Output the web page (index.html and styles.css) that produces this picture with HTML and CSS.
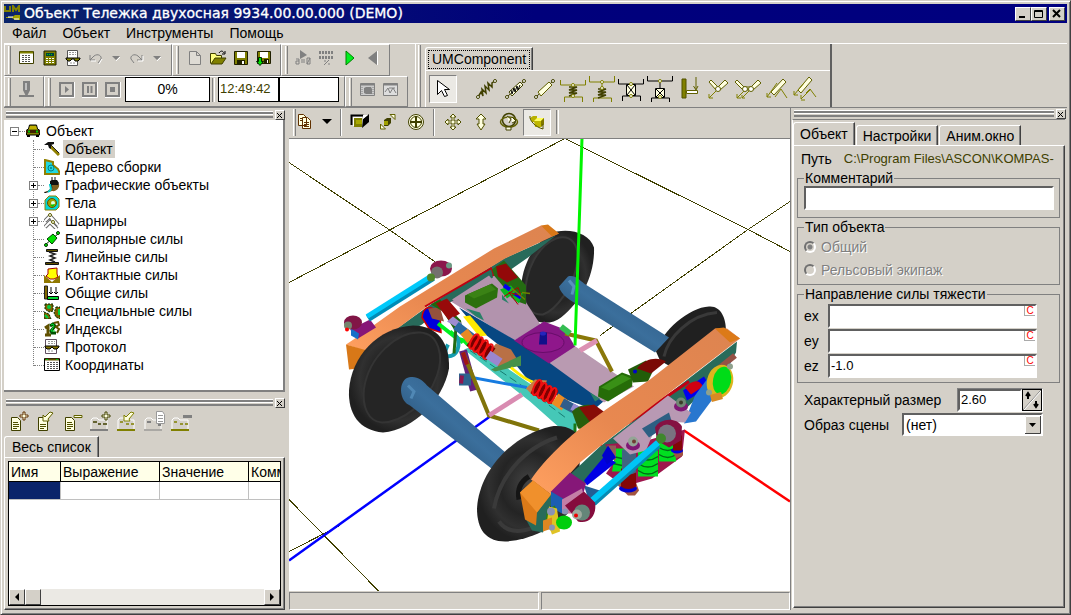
FILE: index.html
```html
<!DOCTYPE html>
<html lang="ru">
<head>
<meta charset="utf-8">
<title>Объект Тележка двухосная 9934.00.00.000 (DEMO)</title>
<link rel="stylesheet" href="styles.css">
</head>
<body>
<div class="window">
  <header class="titlebar">
    <svg class="app-icon" width="17" height="18" viewBox="0 0 17 18"><path d="M1 1v5h5V1M9 7V1l3 4 3-4v6" fill="none" stroke="#808000" stroke-width="2"/><path d="M2 12h6l3-2h5v5h-5l-3-2H2z" fill="#a0a000"/><path d="M4 12h5M10 14h5" stroke="#fff"/></svg>
    <h1>Объект Тележка двухосная 9934.00.00.000 (DEMO)</h1>
    <div class="winbtns">
      <button class="wb" aria-label="Свернуть"><svg width="12" height="10"><path d="M2 8h6" stroke="#000" stroke-width="2"/></svg></button>
      <button class="wb" aria-label="Развернуть"><svg width="12" height="10"><path d="M1.5 1.5h8v7h-8zM1 2.5h9" fill="none" stroke="#000"/></svg></button>
      <button class="wb last" aria-label="Закрыть"><svg width="12" height="10"><path d="M2 1l7 7M9 1L2 8" stroke="#000" stroke-width="2"/></svg></button>
    </div>
  </header>
  <nav class="menu">
    <button>Файл</button><button>Объект</button><button>Инструменты</button><button>Помощь</button>
  </nav>

  <div class="toolbars">
    <div class="toolrows">
      <div class="toolrow">
        <div class="band"><i class="grip"></i>
          <button class="tb" aria-label="Список"><svg width="16" height="16"><path d="M.5 1.500h14v12H.5z" fill="#fff" stroke="#404000"/><path d="M1 2.500h13" stroke="#808000" stroke-width="2"/><path d="M3 5.500h9M3 7.500h9M3 9.500h9M3 11.500h9" stroke="#555" stroke-dasharray="2 1"/></svg></button>
          <button class="tb" aria-label="Калькулятор"><svg width="16" height="16"><path d="M2 1h12v14H2z" fill="#808000" stroke="#202000"/><path d="M4 3h8v3H4z" fill="#004040"/><path d="M4 8.500h8M4 10.500h8M4 12.500h8" stroke="#fff" stroke-dasharray="2 1"/><path d="M5 4.500h6" stroke="#0c0" stroke-dasharray="1 1"/></svg></button>
          <button class="tb" aria-label="Протокол"><svg width="16" height="16"><path d="M2.500.5h10v15h-10z" fill="#fff" stroke="#555"/><path d="M4 2.500h7M4 4.500h7M5 13h6" stroke="#999" stroke-dasharray="2 1"/><path d="M1 8h14v1l-2 2h-3L9 9H7l-2 2H3L1 9z" fill="#808000" stroke="#000"/></svg></button>
          <button class="tb" aria-label="Отменить"><svg width="16" height="14"><path d="M2 4v5h5M2 9l4-4c4-3 8 0 7 3l-3 4" fill="none" stroke="#808080"/><path d="M3 10h5M14 8l-3 5" stroke="#fff"/></svg></button>
          <button class="tb narrow" aria-label="Список отмены"><svg width="10" height="8"><path d="M1 2h8L5 6z" fill="#808080"/><path d="M9 3L5 7" stroke="#fff"/></svg></button>
          <button class="tb" aria-label="Повторить"><svg width="16" height="14"><path d="M13 4v5H8M13 9L9 5C5 2 1 5 2 8l3 4" fill="none" stroke="#808080"/><path d="M14 5v5H9" fill="none" stroke="#fff"/></svg></button>
          <button class="tb narrow" aria-label="Список повтора"><svg width="10" height="8"><path d="M1 2h8L5 6z" fill="#808080"/><path d="M9 3L5 7" stroke="#fff"/></svg></button>
        </div>
        <div class="band"><i class="grip"></i>
          <button class="tb" aria-label="Новый"><svg width="16" height="16"><path d="M2.500 1.500h7l4 4v9h-11zM9.500 1.500v4h4" fill="#dedbd4" stroke="#808080"/></svg></button>
          <button class="tb" aria-label="Открыть"><svg width="18" height="16"><path d="M1.500 13.500v-10h5l1 2h5v3" fill="#ffff80" stroke="#404000"/><path d="M2 14l4-6h11l-4 6z" fill="#808000" stroke="#404000"/><path d="M10 3c2-3 4-2 5 0M16 1v3h-3" fill="none" stroke="#000"/></svg></button>
          <button class="tb" aria-label="Сохранить"><svg width="16" height="16"><path d="M1.500 1.500h13v13h-13z" fill="#808000" stroke="#202000"/><path d="M4 2h8v6H4z" fill="#fff"/><path d="M4 10h8v4H4z" fill="#202000"/><path d="M9 11h2v3H9z" fill="#fff"/></svg></button>
          <button class="tb" aria-label="Сохранить как"><svg width="17" height="16"><path d="M2.500 1.500h13v12h-13z" fill="#808000" stroke="#202000"/><path d="M5 2h8v6H5z" fill="#fff"/><path d="M9 9h5v4H9z" fill="#202000"/><path d="M12 10h1v3h-1z" fill="#fff"/><path d="M3.500 7.500h3v4h2l-3.500 4-3.500-4h2z" fill="#00e000" stroke="#002000"/></svg></button>
        </div>
        <div class="band"><i class="grip"></i>
          <button class="tb" aria-label="Начальные условия"><svg width="17" height="16"><path d="M5 0l7 5-7 4z" fill="#808080"/><path d="M1 9h3v5H1v-3h3M6 10h4M6 12h4M12 8h3v6h-3zM12 14l3-6" fill="none" stroke="#808080"/></svg></button>
          <button class="tb" aria-label="Интегрирование"><svg width="17" height="16"><path d="M1 2.500h15M1 7.500h15" stroke="#808080" stroke-width="3" stroke-dasharray="2 1"/><path d="M6 15l5-5M6 11h2M10 14h2" stroke="#808080"/></svg></button>
          <button class="tb" aria-label="Пуск"><svg width="12" height="16"><path d="M2 1l8 7-8 7z" fill="#00f020" stroke="#008000"/></svg></button>
          <button class="tb" aria-label="Назад"><svg width="12" height="16"><path d="M10 1L1 8l9 7z" fill="#808080"/><path d="M10.500 1v14" stroke="#fff"/></svg></button>
        </div>
      </div>
      <div class="toolrow">
        <div class="band"><i class="grip"></i>
          <button class="tb" aria-label="Перо"><svg width="17" height="18"><path d="M6 1h5v8l-2 4H8L6 9zM1 15h15" fill="#808080" stroke="#808080" stroke-width="2"/><path d="M8 2v7" stroke="#fff"/></svg></button>
        </div>
        <div class="band"><i class="grip"></i>
          <button class="tb" aria-label="Воспроизвести"><svg width="16" height="16"><path d="M1 1h13v13H1z" fill="none" stroke="#808080" stroke-width="2"/><path d="M6 4l4 3.500L6 11z" fill="#808080"/><path d="M15.500 0v15.500H0" fill="none" stroke="#fff"/></svg></button>
          <button class="tb" aria-label="Пауза"><svg width="16" height="16"><path d="M1 1h13v13H1z" fill="none" stroke="#808080" stroke-width="2"/><path d="M6 4v7M9.500 4v7" stroke="#808080" stroke-width="2"/><path d="M15.500 0v15.500H0" fill="none" stroke="#fff"/></svg></button>
          <button class="tb" aria-label="Стоп"><svg width="16" height="16"><path d="M1 1h13v13H1z" fill="none" stroke="#808080" stroke-width="2"/><path d="M5 5h5v5H5z" fill="#808080"/><path d="M15.500 0v15.500H0" fill="none" stroke="#fff"/></svg></button>
          <output class="readout progress">0%</output><i class="handle"></i>
          <output class="readout time">12:49:42</output><output class="readout blank"></output>
        </div>
        <div class="band"><i class="grip"></i>
          <button class="tb" aria-label="Окно анимации"><svg width="16" height="16"><path d="M.5 1.500h14v12H.5z" fill="#ccc" stroke="#808080"/><path d="M1 2.500h14" stroke="#808080" stroke-width="2"/><path d="M4 6l2-1h5l1 2v5H6L4 11z" fill="#808080"/><path d="M2 5v8M13 5v8" stroke="#808080" stroke-dasharray="1 1"/></svg></button>
          <button class="tb" aria-label="Окно графика"><svg width="16" height="16"><path d="M.5 1.500h14v12H.5z" fill="#ddd" stroke="#808080"/><path d="M1 2.500h14" stroke="#808080" stroke-width="2"/><path d="M2 10l3-4 2 5 3-5 3 5M6 6h6" fill="none" stroke="#808080"/></svg></button>
        </div>
      </div>
    </div>
    <div class="components"><i class="grip"></i>
      <div class="comp-main">
        <div class="tabs"><button class="tab on"><span class="focus">UMComponent</span></button></div>
        <div class="comp-row">
          <button class="pressed pick" aria-label="Выбор"><svg width="14" height="20"><path d="M1.500 1.500v14l4-4 3 6 3-1-3-6h5z" fill="#fff" stroke="#000"/></svg></button>
          <button class="cb" aria-label="Пружина"><svg width="24" height="24"><path d="M3 20l3-5 2 4-1-7 4 4-1-7 4 4-1-7 4 4 0-4 3-2" fill="none" stroke="#404000" stroke-width="1.500"/><g fill="#fff" stroke="#404000"><circle cx="3" cy="20" r="1.500"/><circle cx="20" cy="4" r="1.500"/></g></svg></button>
          <button class="cb" aria-label="Пружина с демпфером"><svg width="24" height="24"><path d="M3 20L20 4" stroke="#404000"/><path d="M5 15L16 5l3 3L8 19z" fill="#ffffe0" stroke="#404000"/><path d="M7 13l1 4 2-6 1 4 2-6 1 4 2-5" fill="none" stroke="#000"/><g fill="#fff" stroke="#404000"><circle cx="3" cy="20" r="1.500"/><circle cx="20" cy="4" r="1.500"/></g></svg></button>
          <button class="cb" aria-label="Демпфер"><svg width="24" height="24"><path d="M3 20L20 4" stroke="#404000"/><path d="M5 15L16 5l3 3L8 19z" fill="#ffffe0" stroke="#606000"/><g fill="#fff" stroke="#404000"><circle cx="3" cy="20" r="1.500"/><circle cx="20" cy="4" r="1.500"/></g></svg></button>
          <button class="cb" aria-label="Линейный элемент"><svg width="27" height="27"><path d="M.5 4v5h25V4M4.500 26v-5h18v5" fill="none" stroke="#808000"/><path d="M9 11h8l-8 3h8l-8 3h8l-8 3" fill="none" stroke="#404000" stroke-width="1.500"/><g fill="#fff" stroke="#808000"><circle cx="13" cy="9" r="1.500"/><circle cx="13" cy="20" r="1.500"/></g></svg></button>
          <button class="cb" aria-label="Линейный элемент 2"><svg width="27" height="27"><path d="M.5 0v6h25V0M4.500 26v-4h18v4M13 7v4" fill="none" stroke="#808000"/><path d="M9 13h8l-8 3h8l-8 3h8l-8 3" fill="none" stroke="#404000" stroke-width="1.500"/><g fill="#fff" stroke="#808000"><circle cx="13" cy="6" r="1.500"/><circle cx="13" cy="12" r="1.500"/></g></svg></button>
          <button class="cb" aria-label="Связь"><svg width="27" height="27"><path d="M.5 3v5h25V3M4.500 25v-5h18v5" fill="none" stroke="#000"/><path d="M8.500 8.500h9v11h-9z" fill="#ffffe0" stroke="#000"/><path d="M9 9l8 10M17 9L9 19" stroke="#000"/><g fill="#fff" stroke="#808000"><circle cx="13" cy="8" r="1.500"/><circle cx="13" cy="20" r="1.500"/></g></svg></button>
          <button class="cb" aria-label="Связь 2"><svg width="27" height="27"><path d="M.5 0v5h25V0M4.500 26v-4h18v4M13 6v6" fill="none" stroke="#000"/><path d="M8.500 12.500h9v9h-9z" fill="#ffffe0" stroke="#000"/><path d="M9 13l8 8M17 13l-8 8" stroke="#000"/><g fill="#fff" stroke="#808000"><circle cx="13" cy="5" r="1.500"/><circle cx="13" cy="21" r="1.500"/></g></svg></button>
          <button class="cb" aria-label="Общая сила"><svg width="20" height="24"><path d="M2 2h4v19H2z" fill="#808000" stroke="#505000"/><path d="M6.500 13.500h11v3h-11z" fill="#fff" stroke="#606000"/><path d="M16 0v12M13.500 9l2.500 4 2-4" fill="none" stroke="#606000"/></svg></button>
          <button class="cb" aria-label="Шарнир"><svg width="24" height="24"><path d="M2 5l2-2 7 7 7-7 3 3-8 7h-4z" fill="#ffffe0" stroke="#606000"/><path d="M9 14l-7 7v-4M2 21h4" fill="none" stroke="#808000"/><circle cx="11" cy="12" r="2.500" fill="#fff" stroke="#606000"/></svg></button>
          <button class="cb" aria-label="Двойной шарнир"><svg width="28" height="24"><path d="M1 5l2-2 7 7h7l7-7 3 3-8 7H9z" fill="#ffffe0" stroke="#606000"/><path d="M10 14l-7 7v-4M3 21h4M15 14l-7 7M8 18v3h3" fill="none" stroke="#808000"/><circle cx="11" cy="12" r="2.500" fill="#fff" stroke="#606000"/><circle cx="17" cy="12" r="2.500" fill="#fff" stroke="#606000"/></svg></button>
          <button class="cb" aria-label="Поступательный шарнир"><svg width="24" height="24"><path d="M6 15L18 2l3 3L9 18z" fill="#ffffe0" stroke="#606000"/><path d="M12 6L2 20v-4M2 20h4M10 20l6-8 6 9" fill="none" stroke="#808000"/></svg></button>
          <button class="cb" aria-label="Сложный шарнир"><svg width="26" height="26"><path d="M5 14L16 1l3 3L8 17z" fill="#ffffe0" stroke="#606000"/><path d="M11 7L1 19v-4M1 19h4M18 13L8 23v-4M8 24h4M13 17l4-4 6 8" fill="none" stroke="#808000"/></svg></button>
        </div>
      </div>
    </div>
  </div>

  <main class="workspace">
    <aside class="left">
      <section class="dock tree-dock">
        <div class="dockbar"><i class="bars"></i><button class="x" aria-label="Закрыть дерево"><svg width="7" height="7"><path d="M1 1l5 5M6 1L1 6" stroke="#000"/></svg></button></div>
        <div class="tree">
          <div class="node root"><button class="toggle minus" aria-label="Свернуть"></button><i class="dots"></i><svg width="16" height="16"><path d="M3.500 6l1-4h7l1 4 2 1v5h-13V7z" fill="#808000" stroke="#000"/><path d="M5 3h6l1 3H4z" fill="#c0b000"/><path d="M1 8.500h14" stroke="#402000" stroke-width="3"/><path d="M3 8.500h2M11 8.500h2" stroke="#0c0" stroke-width="2"/><path d="M2 12h3v2H2zM11 12h3v2h-3z"/></svg><span>Объект</span></div>
          <ul>
            <li class="node"><i class="dots"></i><svg width="16" height="16"><path d="M6 5l9 9" stroke="#908000" stroke-width="3"/><path d="M0 4l4-3h6v2L7 4v4L5 7 4 4z" fill="#111"/><path d="M7 4l8 8" stroke="#222"/></svg><span class="sel">Объект</span></li>
            <li class="node"><i class="dots"></i><svg width="16" height="16"><path d="M1 1l4 1 4 1v3l5 4 2 5H1z" fill="#20d8e0" stroke="#908000" stroke-width="2"/><circle cx="7" cy="9" r="3" fill="none" stroke="#008080"/><circle cx="7" cy="9" r="1" fill="#008080"/></svg><span>Дерево сборки</span></li>
            <li class="node"><button class="toggle" aria-label="Развернуть"></button><i class="dots"></i><svg width="16" height="16"><path d="M7 7h8c1 4-3 8-7 7-4 1-6 2-8 1 6-1 7-4 7-8z" fill="#806020"/><path d="M6 4l2-1h5l2 3-1 2H6z" fill="#111"/><path d="M8 0v4M11 0v4M7 8c2 4 0 6-7 8" stroke="#111" fill="none"/><path d="M6 7c0 4 3 5-2 8" stroke="#0cc" stroke-width="2" fill="none"/></svg><span>Графические объекты</span></li>
            <li class="node"><button class="toggle" aria-label="Развернуть"></button><i class="dots"></i><svg width="16" height="16"><path d="M1 5l4-4h7l3 3v8l-3 3H1z" fill="#00d8d8" stroke="#908000"/><circle cx="8" cy="8" r="4.500" fill="#a0a000" stroke="#605000"/><circle cx="9" cy="8" r="2" fill="#e0ffe0"/><path d="M6 10l3 2 2-3" fill="#0c0"/></svg><span>Тела</span></li>
            <li class="node"><button class="toggle" aria-label="Развернуть"></button><i class="dots"></i><svg width="16" height="16"><path d="M1 8l5-5 8 9M1 14l5-5 7 7M6 3l3 5" fill="none" stroke="#666" stroke-width="4"/><path d="M1 8l5-5 8 9M1 14l5-5 7 7M6 3l3 5" fill="none" stroke="#fff" stroke-width="2"/><circle cx="6" cy="2" r="1.500" fill="#fff" stroke="#606000"/><circle cx="9" cy="9" r="1.500" fill="#ffe" stroke="#606000"/></svg><span>Шарниры</span></li>
            <li class="node"><i class="dots"></i><svg width="16" height="16"><path d="M1 14L15 2" stroke="#030"/><path d="M3 8l6-5 4 4-5 6z" fill="#00e000" stroke="#004000"/><circle cx="2" cy="14" r="1.500" fill="#0e0" stroke="#030"/><circle cx="14" cy="2" r="1.500" fill="#0e0" stroke="#030"/></svg><span>Биполярные силы</span></li>
            <li class="node"><i class="dots"></i><svg width="16" height="16"><path d="M2.500.5h11v2h-11zM1.500 13.500h13v2h-13z" fill="#605000" stroke="#111"/><path d="M5 3l6 2-5 2 5 2-5 2 5 2" fill="none" stroke="#222" stroke-width="1.500"/></svg><span>Линейные силы</span></li>
            <li class="node"><i class="dots"></i><svg width="16" height="16"><path d="M0 8l8 7 8-7v8H0z" fill="#907800"/><path d="M4 2l9-1v6l1 3-4 2H6l-4-3 2-2z" fill="#ff0" stroke="#a00000"/></svg><span>Контактные силы</span></li>
            <li class="node"><i class="dots"></i><svg width="16" height="16"><path d="M.5 1h3v13h-3z" fill="#806800" stroke="#222"/><path d="M3.500 11.500h11v3h-11z" fill="#00d830" stroke="#000"/><path d="M7 2v7M5 7l2 2 2-2M12 2v7M10 7l2 2 2-2" fill="none" stroke="#000"/></svg><span>Общие силы</span></li>
            <li class="node"><i class="dots"></i><svg width="16" height="16"><path d="M1 1h8v7l-4 1-4-3zM0 9l5 2 2 5H0zM12 4h4v12l-4-2-2-4z" fill="#806000" stroke="#003000" stroke-dasharray="2 1"/><circle cx="5" cy="4" r="2" fill="#0c4"/><path d="M15 6v6M1 12l3 3" stroke="#00d040" stroke-width="2"/></svg><span>Специальные силы</span></li>
            <li class="node"><i class="dots"></i><svg width="16" height="16"><path d="M1 7l3-2v9M1 14h6" stroke="#605000" stroke-width="3" fill="none"/><path d="M6 5l3-2 2 2-4 5 1 2h4" fill="none" stroke="#005000" stroke-width="3"/><path d="M7 4l2-1 1 2-3 5h4" fill="none" stroke="#00e030"/><path d="M10 2l4-1 1 3-3 2 3 2-2 4" fill="none" stroke="#605000" stroke-width="2"/></svg><span>Индексы</span></li>
            <li class="node"><i class="dots"></i><svg width="16" height="16"><path d="M1.500.5h11v14h-11z" fill="#fff" stroke="#605060"/><path d="M4 2.500h7M4 4.500h7M4 12h6" stroke="#999" stroke-dasharray="2 1"/><path d="M1 7h14v1l-2 2h-3L8 8 6 10H3L1 8z" fill="#807000" stroke="#000"/></svg><span>Протокол</span></li>
            <li class="node"><i class="dots"></i><svg width="16" height="16"><path d="M.5 1.500h15v12H.5z" fill="#fff" stroke="#000"/><path d="M1 2.500h14" stroke="#605000" stroke-width="2"/><path d="M2 2.500h12" stroke="#00c020" stroke-dasharray="2 8"/><path d="M3 5.500h11M3 7.500h11M3 9.500h11M3 11.500h11" stroke="#555" stroke-dasharray="2 1"/></svg><span>Координаты</span></li>
          </ul>
        </div>
      </section>
      <section class="dock list-dock">
        <div class="dockbar"><i class="bars"></i><button class="x" aria-label="Закрыть список"><svg width="7" height="7"><path d="M1 1l5 5M6 1L1 6" stroke="#000"/></svg></button></div>
        <div class="listtools">
          <button aria-label="Добавить"><svg width="20" height="22"><path d="M2.500 6.500h6l3 3v10h-9z" fill="#ffffe0" stroke="#404000"/><path d="M4 11.500h5M4 13.500h6M4 15.500h6M4 17.500h4" stroke="#505000"/><path d="M14 1h2v3h3v2h-3v3h-2V6h-3V4h3z" fill="#ffffe0" stroke="#603000"/></svg></button>
          <button aria-label="Изменить"><svg width="20" height="22"><path d="M2.500 6.500h6l3 3v10h-9z" fill="#ffffe0" stroke="#404000"/><path d="M4 13.500h6M4 15.500h6M4 17.500h4" stroke="#505000"/><path d="M7 10V4l2 2 5-5 3 1-5 6 1 2z" fill="#ffffe0" stroke="#606000"/></svg></button>
          <button aria-label="Удалить"><svg width="20" height="22"><path d="M2.500 6.500h6l3 3v10h-9z" fill="#ffffe0" stroke="#404000"/><path d="M4 11.500h5M4 13.500h6M4 15.500h6M4 17.500h4" stroke="#505000"/><path d="M11 4.500h8v2h-8z" fill="#ffffe0" stroke="#606000"/></svg></button>
          <button aria-label="Добавить группу"><svg width="22" height="22"><path d="M1 18V9l2-2h4l2 2h8v9" fill="none" stroke="#fff"/><path d="M0 19h18" stroke="#808080" stroke-width="2"/><path d="M3 11h4M8 13h3M13 13h4" fill="none" stroke="#404000" stroke-width="1.500"/><path d="M15 1h2v3h3v2h-3v3h-2V6h-3V4h3z" fill="#ffffe0" stroke="#404000"/></svg></button>
          <button aria-label="Изменить группу"><svg width="20" height="22"><path d="M1 18V9l2-2h4l2 2h8v9" fill="none" stroke="#fff"/><path d="M0 19h18" stroke="#808000" stroke-width="2"/><path d="M3 11h3M9 13h3M14 13h3" stroke="#808000" stroke-width="1.500"/><path d="M7 10V4l2 2 5-5 3 1-5 6 1 2z" fill="#ffffe0" stroke="#808000"/></svg></button>
          <button aria-label="Копировать"><svg width="22" height="22"><path d="M1 18V9l2-2h4l2 2h8v9" fill="none" stroke="#fff"/><path d="M0 19h18" stroke="#808080"/><path d="M3 11h4M14 14h3" stroke="#808080" stroke-width="2"/><path d="M12.500.5h6l2 3v9h-8z" fill="#fff" stroke="#999"/><path d="M14 4.500h5M14 7.500h5M14 10.500h5" stroke="#999"/></svg></button>
          <button aria-label="Удалить группу"><svg width="22" height="22"><path d="M1 18V9l2-2h4l2 2h8v9" fill="none" stroke="#fff"/><path d="M0 19h18" stroke="#808000" stroke-width="2"/><path d="M3 11h3M9 13h3M14 13h3" stroke="#808000" stroke-width="1.500"/><path d="M12 5.500h9" stroke="#808080" stroke-width="3"/></svg></button>
        </div>
        <div class="tabs"><button class="tab on whole">Весь список</button></div>
        <div class="listpage">
          <div class="gridbox">
            <div class="gridview">
              <table>
                <thead><tr><th class="c1">Имя</th><th class="c2">Выражение</th><th class="c3">Значение</th><th class="c4">Комм</th></tr></thead>
                <tbody><tr><td class="cur"></td><td></td><td></td><td></td></tr></tbody>
              </table>
            </div>
            <div class="hscroll"><button class="sb" aria-label="Влево"><svg width="6" height="8"><path d="M5 0v8L1 4z"/></svg></button><i class="thumb"></i><button class="sb end" aria-label="Вправо"><svg width="6" height="8"><path d="M1 0v8l4-4z"/></svg></button></div>
          </div>
        </div>
      </section>
    </aside>

    <section class="center">
      <div class="viewtools"><i class="grip"></i>
        <button class="vb copy" aria-label="Копировать"><svg width="14" height="18"><g fill="#ffffe0" stroke="#603000"><path d="M.5 1.500h5l3 3v8h-8zM4.500 4.500h5l3 3v8h-8z"/></g><path d="M6 9.500h5M6 11.500h5M6 13.500h5M2 5.500h2M2 7.500h2" stroke="#603000"/></svg></button>
        <button class="vb drop" aria-label="Меню копирования"><svg width="10" height="6"><path d="M0 0h10L5 5z"/></svg></button>
        <i class="sep"></i>
        <button class="vb" aria-label="Перспектива"><svg width="20" height="18"><path d="M1.500 12V2.500h12" fill="none" stroke="#000" stroke-width="2"/><path d="M3 4h9v9H3z" fill="#fff"/><path d="M4 5h8v9H4z" fill="#808000"/><path d="M6 7h6v4H6z" fill="#a8a800"/><path d="M13 6l6-5v8l-7 6z"/><path d="M13 2h5l-5 4z" fill="#fff"/></svg></button>
        <button class="vb" aria-label="Масштаб"><svg width="18" height="18"><path d="M5 7l3-2h4v5l-3 3H5z" fill="#404000"/><path d="M5 8h4v4H5z" fill="#a0a000"/><path d="M11 1.500h5v5zM1.500 11v5h5z" fill="#ffffe0" stroke="#606000"/></svg></button>
        <button class="vb" aria-label="Центрировать"><svg width="18" height="18"><circle cx="9" cy="9" r="7.500" fill="#ffffe0" stroke="#404000"/><path d="M9 3v12M3 9h12" stroke="#404000" stroke-width="2"/><circle cx="9" cy="9" r="5.500" fill="none" stroke="#404000"/></svg></button>
        <i class="sep"></i>
        <button class="vb" aria-label="Сдвиг"><svg width="18" height="18"><path d="M9 1l3 3h-2v4h4V6l3 3-3 3v-2h-4v4h2l-3 3-3-3h2v-4H4v2L1 9l3-3v2h4V4H6z" fill="#ffffe0" stroke="#505000"/></svg></button>
        <button class="vb" aria-label="Приближение"><svg width="14" height="18"><path d="M7 1l5 5H9v5h2l-4 6-4-6h2V6H2z" fill="#ffffe0" stroke="#505000"/></svg></button>
        <button class="vb" aria-label="Вращение"><svg width="20" height="20"><circle cx="10" cy="8" r="6.500" fill="none" stroke="#404000" stroke-width="1.500"/><ellipse cx="10" cy="10" rx="8.500" ry="5" fill="none" stroke="#606000" stroke-width="1.500"/><path d="M8 4l4 3-2 4M13 5l4 4-4 2" fill="#ffffe0" stroke="#404000"/><path d="M7 15h5v3H7z" fill="#ffffe0" stroke="#404000"/></svg></button>
        <button class="vb pressed" aria-label="Тело"><svg width="16" height="16"><path d="M1 4l3-2h4v6H3z" fill="#b8b000"/><path d="M5 7l3-3h7v6l-3 3H6z" fill="#c0b800"/><path d="M5 7l3-3h7l-3 3z" fill="#ffff60"/><path d="M12 7l3-3v6l-3 3z" fill="#807800"/><path d="M1 2c-1 4 5 11 13 13v-5" fill="none" stroke="#505000"/></svg></button>
        <i class="handle"></i>
      </div>
      <svg class="scene" viewBox="289 139 501 453" preserveAspectRatio="xMidYMid slice" role="img" aria-label="Тележка двухосная">
        <defs>
          <linearGradient id="ax" x1="0" y1="1" x2="1" y2="0"><stop offset="0" stop-color="#1c3c58"/><stop offset=".5" stop-color="#3b6f9c"/><stop offset="1" stop-color="#28517a"/></linearGradient>
          <radialGradient id="wh"><stop offset="0" stop-color="#444"/><stop offset=".55" stop-color="#242424"/><stop offset=".78" stop-color="#303030"/><stop offset="1" stop-color="#202020"/></radialGradient>
          <linearGradient id="or" x1="0" y1="1" x2="1" y2="0"><stop offset="0" stop-color="#ffa060"/><stop offset=".4" stop-color="#e88850"/><stop offset="1" stop-color="#dd8450"/></linearGradient>
        </defs>
        <g stroke="#404000" fill="none" shape-rendering="crispEdges"><path d="M289 163L389 230L436 263M289 283L565 139M565 139L748 230L790 252M790 202L748 230L600 336M289 500L379 592M289 552L340 526"/></g>
        <g fill="none" stroke-width="2.500"><path d="M289 561L490 417" stroke="#00f"/><path d="M684 431L790 502" stroke="#f00"/></g>
        <!-- far right wheel and rear axle -->
        <path d="M656 352C662 331 689 308 709 307C721 306 726 319 726 331L704 354L672 368L660 361Z" fill="#202020"/>
        <path d="M664 357C668 338 690 315 717 313" fill="none" stroke="#393939" stroke-width="3"/>
        <path d="M521 292C521 264 537 238 557 232C573 229 590 235 594 248C595 273 583 301 561 318C550 327 531 324 524 312Z" fill="url(#wh)"/>
        <path d="M525 297C525 271 538 246 556 239C570 234 580 244 577 264C574 286 557 310 543 315C532 316 525 307 525 297Z" fill="#252525" stroke="#383838" stroke-width="2"/>
        <path d="M568 277C575 275 580 281 584 284L669 338L655 353L579 306C571 301 561 296 559 287Z" fill="url(#ax)"/><path d="M569 281l5 6-2 8" fill="none" stroke="#5a91be" stroke-width="3"/>
        <!-- upper side frame -->
        <path d="M362 354L432 304L504 259L556 236L528 258L508 272L452 299L422 325L375 351Z" fill="#286b5b"/>
        <path d="M346 345L358 337L400 307L494 249L541 226L559 234L505 259L431 304L367 352Z" fill="url(#or)"/>
        <path d="M541 226L548 225L559 234L552 237ZM346 345L367 351L358 369L349 370Z" fill="#d87818"/>
        <path d="M446 299L480 280L506 272L541 326L514 341Z" fill="#b293ad"/><path d="M425 307L491 269L494 275L449 302" fill="none" stroke="#c00010" stroke-width="2"/>
        <path d="M444 298L491 270L493 278L448 304" fill="#286b5b"/>
        <path d="M452 300L489 276L501 291L538 322L514 341L468 309Z" fill="#b293ad"/>
        <path d="M492 270L504 261L526 286L526 305L515 301L494 276Z" fill="#246b12"/><path d="M496 267L506 264L518 278L507 283L498 277Z" fill="#930909"/>
        <path d="M500 290l11-4 5 6-9 7zM510 297l13-4-4 11z" fill="#0cb820"/><path d="M504 286l6 4M515 294l6 4" stroke="#0000ed" stroke-width="4"/><path d="M504 297l14-9 3 8-12-3 9 12" fill="none" stroke="#b00000"/><path d="M512 289l13 11M522 293l8 1" stroke="#708000" stroke-width="1.500"/>
        <!-- bolster -->
        <path d="M459 308L514 340L550 362L608 398L594 410L563 399L530 383L502 348L474 326Z" fill="#074782"/>
        <path d="M549 363L574 346L634 387L604 403Z" fill="#b99ab1"/>
        <path d="M514 341L544 322L565 330L575 347L549 364Z" fill="#861785"/><ellipse cx="543" cy="343" rx="21" ry="10" fill="#8f178b" stroke="#670d69"/><path d="M540 333h7v12h-8z" fill="#10108a"/><ellipse cx="543" cy="334" rx="3" ry="2" fill="#2424bd"/>
        <path d="M465 296L492 284L498 289L497 298L476 309L465 303Z" fill="#2c700e"/><path d="M467 295L490 285L496 290L474 299Z" fill="#3a8215"/>
        <path d="M599 387L622 373L633 377L632 387L608 402L598 397Z" fill="#256c08"/><path d="M601 388L622 375L631 379L609 391Z" fill="#399016"/>
        <path d="M466 309l14 4 4 8-8-4zM502 295l7 9-7-4zM590 393l10 6-5 3z" fill="#288068"/>
        <!-- near-left machinery -->
        <path d="M422 318C423 307 430 304 440 315L441 333L429 329Z" fill="#0000dc" stroke="#c00" stroke-width="1.500"/><path d="M428 309l12-1 4 14-12-3z" fill="#95513d"/>
        <path d="M431 305L440 300L461 321L463 333L454 330L443 312Z" fill="#21670a"/><path d="M436 304L447 299L460 314L449 321Z" fill="#980a0a"/>
        <path d="M447 322l6-5 9 7-5 4z" fill="#a08cd0"/><path d="M463 317l7-1 17 20-8 1z" fill="#ffe900"/><path d="M438 324l19 15 7 2 5 5M450 332l13 11" fill="none" stroke="#00f020" stroke-width="4"/>
        <path d="M448 345c-5 9-2 15 6 10 6-5 6-17 0-20" fill="none" stroke="#169daf" stroke-width="4"/><path d="M456 327l-2 27" stroke="#226b12" stroke-width="3"/>
        <path d="M456 326l17 13" stroke="#2868a0" stroke-width="9"/><path d="M464 332l7 9" stroke="#e88a23" stroke-width="9"/>
        <path d="M464 350L474 346L578 417L574 441L530 402Z" fill="#45c8b7"/><path d="M470 351L532 393L568 420" fill="none" stroke="#167d73" stroke-dasharray="8 4"/>
        <path d="M496 344L511 350L521 366L500 369L488 354Z" fill="#b97045"/><path d="M491 370L521 356L521 366L495 372Z" fill="#45914a"/>
        <path d="M471 340l20 15" stroke="#760000" stroke-width="15"/><g fill="none" stroke="#f01010" stroke-width="2"><ellipse cx="474" cy="342" rx="3" ry="8" transform="rotate(28 474 342)"/><ellipse cx="478" cy="345" rx="3" ry="8" transform="rotate(28 478 345)"/><ellipse cx="483" cy="348" rx="3" ry="8" transform="rotate(28 483 348)"/><ellipse cx="488" cy="352" rx="3" ry="8" transform="rotate(28 488 352)"/></g><path d="M488 355l12 8" stroke="#9b86cf" stroke-width="9"/>
        <path d="M463 351L474 391" stroke="#64217b" stroke-width="8"/><path d="M472 378L527 388" stroke="#167be0" stroke-width="3"/><path d="M459 374h12v12h-12z" fill="#2d628e"/><path d="M462 376l-1 8" stroke="#901650" stroke-width="4"/>
        <path d="M511 368q17 15 28 16" fill="none" stroke="#ffed00" stroke-width="3"/>
        <path d="M463 353L489 416L539 431" fill="none" stroke="#80740a" stroke-width="4"/><path d="M489 416L522 395" stroke="#d98bb1" stroke-width="5"/><path d="M463 353l4 12" stroke="#a11517" stroke-width="4"/>
        <path d="M565 334L596 341L612 372" fill="none" stroke="#8a7809" stroke-width="4"/><path d="M580 351L597 341" stroke="#dc91b3" stroke-width="5"/><path d="M561 327l9 7" stroke="#34bd52" stroke-width="6"/>
        <path d="M526 389l9-9 12 1-3 7-11 8z" fill="#c87a43"/><path d="M534 387l21 11" stroke="#810000" stroke-width="15"/><g fill="none" stroke="#f01010" stroke-width="2"><ellipse cx="537" cy="388" rx="3" ry="8" transform="rotate(25 537 388)"/><ellipse cx="542" cy="391" rx="3" ry="8" transform="rotate(25 542 391)"/><ellipse cx="547" cy="394" rx="3" ry="8" transform="rotate(25 547 394)"/><ellipse cx="552" cy="396" rx="3" ry="8" transform="rotate(25 552 396)"/></g><path d="M555 399l10 7" stroke="#ed8b22" stroke-width="12"/><path d="M562 403l15 8" stroke="#315d8b" stroke-width="9"/><path d="M572 407l11 6" stroke="#988ad0" stroke-width="7"/>
        <path d="M572 412C581 403 595 403 602 413L590 431L578 429Z" fill="#285e0b"/><path d="M579 408L594 405L605 413L592 425Z" fill="#870c07"/><path d="M575 424v18" stroke="#187818" stroke-width="3"/>
        <path d="M628 370l18-9 9 6-7 15-15 1z" fill="#225d09"/><path d="M637 369C645 359 657 357 666 362L651 374Z" fill="#7b0906"/><circle cx="635" cy="372" r="2" fill="#00c"/>
        <!-- near left wheel -->
        <path d="M349 391C351 357 378 328 413 326C437 326 450 343 449 369C443 401 414 430 383 433C359 431 348 414 349 391Z" fill="url(#wh)"/><path d="M364 389C369 357 397 332 420 333C439 334 444 357 437 376C427 405 401 423 382 423C368 422 362 407 364 389Z" fill="#252525" stroke="#343434" stroke-width="2"/>
        <path d="M406 379C415 375 422 380 427 386L509 456L494 471L410 406C400 402 398 385 406 379Z" fill="url(#ax)"/><path d="M408 386l6 6-3 7" fill="none" stroke="#5088b5" stroke-width="3"/>
        <path d="M477 509C479 472 511 436 551 427C566 425 579 431 580 443L579 500C563 526 530 541 505 542C486 542 477 530 477 509Z" fill="url(#wh)"/><path d="M494 509C499 480 522 449 557 438M499 522C512 540 537 528 548 520" fill="none" stroke="#3a3a3a" stroke-width="4"/><path d="M519 500q-3-15 10-23" fill="none" stroke="#151515" stroke-width="5"/>
        <!-- lower side frame and suspension -->
        <path d="M737 342L736 353L719 380L706 390L687 408L655 423L588 482L550 507L543 533L532 531L526 520L551 493L600 447Z" fill="#286b5a"/>
        <path d="M683 391L704 377L710 387L687 401Z" fill="#00e"/><path d="M685 388q12-12 18-1l-12 8z" fill="#d00010"/><path d="M709 377l24-20-11 30-26 35-12 2 11-28z" fill="#2877cf"/><path d="M720 368l15-12" stroke="#945246" stroke-width="6"/>
        <path d="M600 446C606 431 629 426 652 407L689 382" fill="none" stroke="#c00012" stroke-width="3"/>
        <path d="M531 480C547 457 569 438 579 430L606 410L650 380L715 329L727 329L740 339L680 385L650 408L601 446L580 463L551 495Z" fill="url(#or)"/><path d="M715 329L724 328L740 339L730 343ZM520 493L533 481L551 495L537 513L536 526L525 520Z" fill="#dc7a18"/><path d="M520 493L533 481L551 495L537 513Z" fill="#f0902c"/>
        <g><ellipse cx="720" cy="382" rx="13" ry="17" transform="rotate(15 720 382)" fill="#dcb51d"/><ellipse cx="722" cy="381" rx="9" ry="14" transform="rotate(12 722 381)" fill="#00dc18"/><circle cx="709" cy="393" r="3" fill="#8fa18d"/><circle cx="730" cy="367" r="3" fill="#8fa18d"/><path d="M711 399l11-3" stroke="#d98a24" stroke-width="7"/></g>
        <path d="M605 445L616 460L606 474L624 487L652 479L682 457L685 430L647 441Z" fill="#9e174d"/>
        <g fill="#00df20"><path d="M616 449h17v23h-21zM638 451h20v26h-20zM659 442h17v20h-17z"/></g><g fill="none" stroke="#006d16" stroke-width="1.500"><path d="M613 457l18 4M613 464l18 4M638 457q10 7 20 0M638 464q10 7 20 0M638 471q10 7 20 0M659 448q9 6 17 0M659 455q9 6 17 0"/></g>
        <path d="M617 485l11 11h7l4-5-3-8-17-2z" fill="#a15442"/><ellipse cx="628" cy="489" rx="9" ry="4" fill="#0000d0"/><path d="M621 469h15v18q-8 5-15 0z" fill="#830606"/><path d="M622 450h14v23q-7 4-14 0z" fill="#416481"/>
        <path d="M672 451h11v5l-7 3z" fill="#a15442"/><ellipse cx="677" cy="451" rx="6" ry="3" fill="#00d"/><path d="M673 436h9v15h-9z" fill="#820606"/>
        <path d="M613 439L668 396L691 413L685 423L658 422L646 451L630 455Z" fill="#b899b3"/><path d="M642 429L669 413L672 423L649 438Z" fill="#2d5f83"/>
        <path d="M607 446h9v15l-7-2z" fill="#905b57"/><path d="M584 481L605 456L616 463L587 486Z" fill="#0000e4"/><path d="M602 456l6-10 8 12-9 7z" fill="#00c"/>
        <g><ellipse cx="633" cy="446" rx="7" ry="5" fill="#7f1874"/><ellipse cx="633" cy="442" rx="5" ry="5" fill="#94a596"/><circle cx="634" cy="442" r="2" fill="#703c33"/><ellipse cx="681" cy="407" rx="7" ry="5" fill="#7f1874"/><ellipse cx="681" cy="403" rx="5" ry="5" fill="#718774"/><circle cx="681" cy="403" r="2" fill="#3c3b29"/></g>
        <path d="M655 428C660 419 676 417 682 427L681 441L669 448L657 441Z" fill="#851142"/><ellipse cx="667" cy="434" rx="9" ry="9" fill="#797380"/><circle cx="661" cy="439" r="5" fill="#3f872c"/>
        <path d="M584 486L603 492L590 505Z" fill="#235f94"/><path d="M593 503L658 445" stroke="#078bb3" stroke-width="8"/><path d="M592 501L658 443" stroke="#00c5f5" stroke-width="6"/>
        <path d="M551 492L570 473L586 484L582 499L568 511L551 502Z" fill="#861778"/><path d="M551 492L563 499L562 514L551 508Z" fill="#1c5eb2"/><path d="M562 500L582 489L584 497L572 514L562 514Z" fill="#c47fa6"/>
        <path d="M565 506L584 492L595 503C597 515 590 525 578 522L571 513Z" fill="#850d3d"/><ellipse cx="582" cy="513" rx="8" ry="8" fill="#658679"/><circle cx="577" cy="515" r="5" fill="#9eab9e"/><circle cx="576" cy="516" r="2" fill="#e00"/>
        <path d="M547 510l8-4 6 23-10 2-6-5z" fill="#2d7e13"/><path d="M549 507l8 2 3 23-8 3-5-13z" fill="#e0c324"/><ellipse cx="564" cy="523" rx="8" ry="7" fill="#00ce0c"/><path d="M543 521l9-3v11l-9 3z" fill="#df8721"/><g fill="#8b93b5"><circle cx="551" cy="512" r="4"/><circle cx="552" cy="528" r="3"/><circle cx="565" cy="512" r="3"/></g>
        <!-- upper rod -->
        <path d="M350 330l20-10 6 8-18 11z" fill="#871577"/><path d="M351 329l8 5-1 6-7-4z" fill="#1570c9"/><ellipse cx="353" cy="323" rx="9" ry="7" fill="#811546"/><circle cx="348" cy="326" r="4" fill="#75856e"/><circle cx="347" cy="330" r="2" fill="red"/>
        <path d="M368 319L433 278" stroke="#008cb8" stroke-width="7"/><path d="M367 317L432 276" stroke="#00c9fa" stroke-width="5"/><ellipse cx="441" cy="269" rx="11" ry="8" fill="#8b174b"/><circle cx="437" cy="273" r="6" fill="#74716f"/><circle cx="431" cy="278" r="4" fill="#50862c"/><circle cx="449" cy="266" r="3" fill="#6b9b84"/>
        <path d="M582 139L579 230L575 346" stroke="#00f400" stroke-width="3" fill="none"/>
      </svg>
      <div class="status"><i></i><i></i></div>
    </section>

    <aside class="right">
      <div class="dockbar"><i class="bars"></i><button class="x" aria-label="Закрыть панель"><svg width="7" height="7"><path d="M1 1l5 5M6 1L1 6" stroke="#000"/></svg></button></div>
      <div class="inspector">
        <div class="tabs"><button class="tab on">Объект</button><button class="tab">Настройки</button><button class="tab">Аним.окно</button></div>
        <form class="page">
          <p class="path"><span>Путь</span><span class="pathval">C:\Program Files\ASCON\KOMPAS-</span></p>
          <fieldset class="f1"><legend>Комментарий</legend><input type="text" aria-label="Комментарий"></fieldset>
          <fieldset class="f2" disabled><legend>Тип объекта</legend>
            <label><input type="radio" name="type" checked>Общий</label>
            <label><input type="radio" name="type">Рельсовый экипаж</label>
          </fieldset>
          <fieldset class="f3"><legend>Направление силы тяжести</legend>
            <div class="vec"><label for="ex">ex</label><div class="vin"><input id="ex" type="text"><button type="button" class="cbtn">C</button></div></div>
            <div class="vec"><label for="ey">ey</label><div class="vin"><input id="ey" type="text"><button type="button" class="cbtn">C</button></div></div>
            <div class="vec"><label for="ez">ez</label><div class="vin"><input id="ez" type="text" value="-1.0"><button type="button" class="cbtn">C</button></div></div>
          </fieldset>
          <div class="opt size"><label for="size">Характерный размер</label><div class="spinbox"><input id="size" type="text" value="2.60"><button type="button" aria-label="Изменить размер"><svg width="18" height="20"><path d="M0 20L18 0" stroke="#808080"/><path d="M1 20L18 1" stroke="#fff"/><path d="M5 3v6M3 6l2-3 2 3M13 11v6M11 14l2 3 2-3" fill="none" stroke="#000" stroke-width="2"/></svg></button></div></div>
          <div class="opt scene-opt"><label for="img">Образ сцены</label><div class="selwrap"><select id="img"><option>(нет)</option></select><svg class="arrow" width="16" height="18" viewBox="0 0 16 18"><path d="M0 0h16v18H0z" fill="#d4d0c8"/><path d="M.5 17V.5H15" fill="none" stroke="#fff"/><path d="M15.500 0v17.500H0" fill="none" stroke="#404040"/><path d="M4 7h7l-3.500 4z"/></svg></div></div>
        </form>
      </div>
    </aside>
  </main>
</div>
</body>
</html>
```
FILE: styles.css
```css
* { box-sizing: border-box; }
html, body { height: 100%; }
body { margin: 0; background: #d4d0c8; color: #000; font: 14px/18px "Liberation Sans", Arial, sans-serif; overflow: hidden; }
button, input, select { font: inherit; color: inherit; border-radius: 0; }
button { background: none; border: 0; padding: 0; margin: 0; }
button, .node, .band { white-space: nowrap; }
ul, p, h1, fieldset { margin: 0; padding: 0; }
svg { display: block; flex: none; }
i { display: block; flex: none; }

.window { height: 100vh; display: flex; flex-direction: column; padding: 3px 3px 4px; border: 1px solid #d4d0c8; border-right-color: #404040; border-bottom-color: #404040; box-shadow: inset 1px 1px #fff, inset -1px -1px #808080; }
.titlebar { display: flex; align-items: center; height: 19px; flex: none; gap: 3px; color: #fff; background: linear-gradient(90deg, #0a246a, #00007b 50%, #000080); padding-right: 2px; }
.titlebar h1 { flex: 1; font: 14px/19px "DejaVu Sans", sans-serif; -webkit-text-stroke: 0.3px #fff; white-space: nowrap; }
.winbtns { display: flex; }
.wb { width: 16px; height: 14px; padding: 1px; background: #d4d0c8; border: 1px solid; border-color: #fff #404040 #404040 #fff; }
.wb.last { margin-left: 2px; }
.menu { display: flex; height: 21px; flex: none; border-bottom: 1px solid #fff; }
.menu button { padding: 0 8px; }

.toolbars { display: flex; gap: 7px; height: 64px; flex: none; border-bottom: 1px solid #808080; }
.toolrows { display: flex; flex-direction: column; }
.toolrow { display: flex; height: 32px; }
.band { display: flex; align-items: center; border: 1px solid; border-color: #fff #808080 #808080 #fff; padding: 0 5px 4px 3px; }
.toolrow:nth-child(2) .band { padding-bottom: 3px; }
.grip { width: 3px; align-self: stretch; margin: 1px 4px 0 0; border-left: 1px solid #fff; border-right: 1px solid #808080; }
.band .grip { margin-bottom: -3px; }
.tb { width: 23px; height: 24px; display: flex; align-items: center; justify-content: center; }
.tb.narrow { width: 18px; }
.readout { display: block; height: 25px; border: 1px solid #000; background: #fff; line-height: 22px; }
.progress { width: 85px; text-align: center; margin-left: 1px; }
.time { width: 61px; color: #404000; padding-left: 1px; font-size: 13px; }
.blank { width: 60px; }
.handle { width: 3px; height: 24px; margin: 0 3px 0 2px; border-left: 1px solid #808080; border-right: 1px solid #fff; }
.components { display: flex; flex: none; padding-left: 2px; border-left: 1px solid #fff; }
.comp-main { border-right: 2px solid #606060; }
.tabs { display: flex; align-items: flex-end; }
.tab { height: 20px; padding: 0 5px; border: 1px solid; border-color: #fff #404040 transparent #fff; border-top-left-radius: 3px; box-shadow: inset -1px 0 #808080; border-bottom: 0; }
.tab.on { height: 22px; }
.components .tab { padding: 2px; margin-top: 3px; height: 23px; }
.focus { display: block; line-height: 17px; padding: 0 3px; border: 1px dotted #000; }
.comp-row { display: flex; align-items: center; height: 37px; padding: 0 10px 0 3px; border-top: 1px solid #fff; border-left: 1px solid #fff; }
.cb { width: 29px; height: 28px; display: flex; align-items: center; justify-content: center; }
.pressed { border: 1px solid; border-color: #808080 #fff #fff #808080; background: #ebe9e4; }
.pick { width: 28px; height: 28px; margin-right: 15px; display: flex; align-items: center; justify-content: center; }

.workspace { flex: 1; min-height: 0; display: grid; grid-template-columns: 281px minmax(0, 1fr) 277px; }
.left { display: flex; flex-direction: column; min-height: 0; min-width: 0; padding-top: 2px; }
.center { display: flex; flex-direction: column; min-height: 0; margin-left: 4px; background: #fff; }
.dockbar { display: flex; align-items: center; height: 10px; gap: 2px; padding-left: 2px; flex: none; }
.bars { flex: 1; height: 6px; border-top: 2px solid; border-bottom: 2px solid; border-color: #808080; box-shadow: inset 0 1px #fff, 0 -1px #fff; }
.x { width: 10px; height: 10px; border: 1px solid; border-color: #fff #404040 #404040 #fff; background: #d4d0c8; }
.tree-dock { height: 282px; flex: none; display: flex; flex-direction: column; }
.tree { flex: 1; background: #fff; border-right: 2px solid #808080; border-bottom: 2px solid #808080; padding-top: 2px; overflow: hidden; }
.tree ul { list-style: none; margin-left: 29px; border-left: 1px dotted #808080; height: 226px; }
.node { display: flex; align-items: center; height: 18px; }
.node.root { padding-left: 6px; }
.node .dots { width: 10px; border-top: 1px dotted #808080; }
.node.root .dots { width: 6px; }
.node .toggle { width: 9px; height: 9px; flex: none; margin-left: -5px; border: 1px solid #808080; background: linear-gradient(#000, #000) center / 5px 1px no-repeat, linear-gradient(#000, #000) center / 1px 5px no-repeat, #fff; }
.node .toggle + .dots { width: 6px; }
.node.root .toggle { margin-left: 0; background: linear-gradient(#000, #000) center / 5px 1px no-repeat, #fff; }
.node span { margin-left: 3px; padding: 0 2px; line-height: 18px; }
.sel { background: #d4d0c8; }
.list-dock { flex: 1; min-height: 0; display: flex; flex-direction: column; padding-top: 6px; }
.listtools { display: flex; gap: 7px; padding: 3px 0 0 5px; height: 28px; flex: none; }
.listtools button { width: 20px; height: 22px; }
.tab.whole { padding: 0 7px; }
.list-dock .tabs { height: 21px; flex: none; }
.list-dock .tab { height: 21px; }
.listpage { flex: 1; min-height: 0; border: 1px solid; border-color: #fff #404040 #404040 #fff; padding: 3px; box-shadow: inset -1px -1px #808080; display: flex; }
.gridbox { flex: 1; min-width: 0; border: 1px solid #000; background: #fff; display: flex; flex-direction: column; }
.gridview { flex: 1; overflow: hidden; }
table { border-collapse: separate; border-spacing: 0; table-layout: fixed; width: 380px; }
th { font-weight: normal; text-align: left; background: #ffffe8; border-right: 1px solid #000; border-bottom: 1px solid #000; height: 20px; padding: 0 2px; }
td { height: 18px; padding: 0; border-right: 1px solid #c0c0c0; border-bottom: 1px solid #c0c0c0; }
td.cur { background: #0a246a; }
.c1 { width: 52px; } .c2 { width: 99px; } .c3 { width: 89px; }
.hscroll { display: flex; height: 16px; flex: none; background: #ebe9e4; }
.sb, .thumb { width: 16px; height: 16px; background: #d4d0c8; border: 1px solid; border-color: #fff #404040 #404040 #fff; }
.sb { display: flex; align-items: center; justify-content: center; }
.sb.end { margin-left: auto; }

.viewtools { display: flex; align-items: center; height: 31px; flex: none; background: #d4d0c8; border-bottom: 1px solid #808080; padding: 0 0 2px 4px; }
.viewtools .grip { margin-right: 1px; }
.vb { width: 28px; height: 27px; display: flex; align-items: center; justify-content: center; }
.vb.copy { width: 16px; margin-right: 4px; }
.vb.drop { width: 20px; }
.sep { width: 2px; height: 27px; margin: 0 4px 0 3px; border-left: 1px solid #808080; border-right: 1px solid #fff; }
.viewtools .handle { margin-left: 5px; }
.scene { flex: 1; min-height: 0; width: 100%; background: #fff; }
.status { display: flex; gap: 2px; height: 19px; flex: none; background: #d4d0c8; padding-top: 1px; }
.status i { flex: 1; border: 1px solid; border-color: #808080 #fff #fff #808080; }

.right { display: flex; flex-direction: column; min-width: 0; padding: 1px 1px 0 1px; border-left: 1px solid #808080; }
.inspector { flex: 1; display: flex; flex-direction: column; border-top: 1px solid #808080; border-left: 1px solid #fff; padding-top: 2px; min-height: 0; margin: 0 1px 2px 0; }
.inspector .tabs { height: 23px; flex: none; gap: 1px; }
.inspector .tab { padding: 0 6px; }
.inspector .tab.on { height: 23px; }
.page { flex: 1; border: 1px solid; border-color: #fff #404040 #404040 #fff; box-shadow: inset -1px -1px #808080; padding: 4px 4px 0 3px; overflow: hidden; }
.path { display: flex; gap: 12px; padding-left: 4px; height: 20px; white-space: nowrap; }
.pathval { color: #404000; font-size: 13px; }
fieldset { min-width: 0; border: 1px solid #808080; margin-bottom: 1px; }
fieldset legend { margin-left: 0; padding: 0 1px; line-height: 16px; }
.page input[type=text] { display: block; width: 100%; height: 24px; margin: 0; padding: 0 1px; background: #fff; border: 2px solid; border-color: #606060 #fff #fff #606060; outline: 0; font-size: 13px; }
.f1 { height: 48px; padding: 0 5px 0 6px; }
.f2 { height: 66px; padding-left: 6px; color: #808080; text-shadow: 1px 1px #fff; }
.f2 label { display: flex; align-items: center; gap: 5px; height: 23px; }
.f2 legend { color: #000; text-shadow: none; }
.f2 input { appearance: none; margin: 0; width: 12px; height: 12px; border: 2px solid; border-color: #707070 #fff #fff #707070; border-radius: 50%; }
.f2 input:checked { background: radial-gradient(#808080 2px, transparent 3px); }
.f3 { height: 97px; padding: 1px 22px 0 6px; }
.vec { display: flex; align-items: center; height: 25px; }
.vec label { width: 24px; }
.vin { flex: 1; position: relative; }
.cbtn { position: absolute; right: 2px; top: 2px; width: 11px; height: 10px; background: #fff; color: #f00; font-size: 10px; line-height: 9px; border-left: 1px solid #aaa; border-bottom: 1px solid #aaa; }
.opt { display: flex; align-items: center; justify-content: space-between; height: 25px; padding: 0 17px 0 7px; white-space: nowrap; }
.size { margin-top: 4px; }
.spinbox { display: flex; width: 86px; height: 24px; border: 1px solid; border-color: #808080 #fff #fff #808080; }
.page .spinbox input[type=text] { flex: 1; min-width: 0; height: 22px; }
.spinbox button { width: 20px; flex: none; border: 1px solid #000; overflow: hidden; }
.selwrap { position: relative; width: 141px; height: 23px; }
select { appearance: none; width: 100%; height: 23px; padding: 0 2px; background: #fff; border: 2px solid; border-color: #606060 #fff #fff #606060; }
.arrow { position: absolute; right: 2px; top: 3px; pointer-events: none; }
```
